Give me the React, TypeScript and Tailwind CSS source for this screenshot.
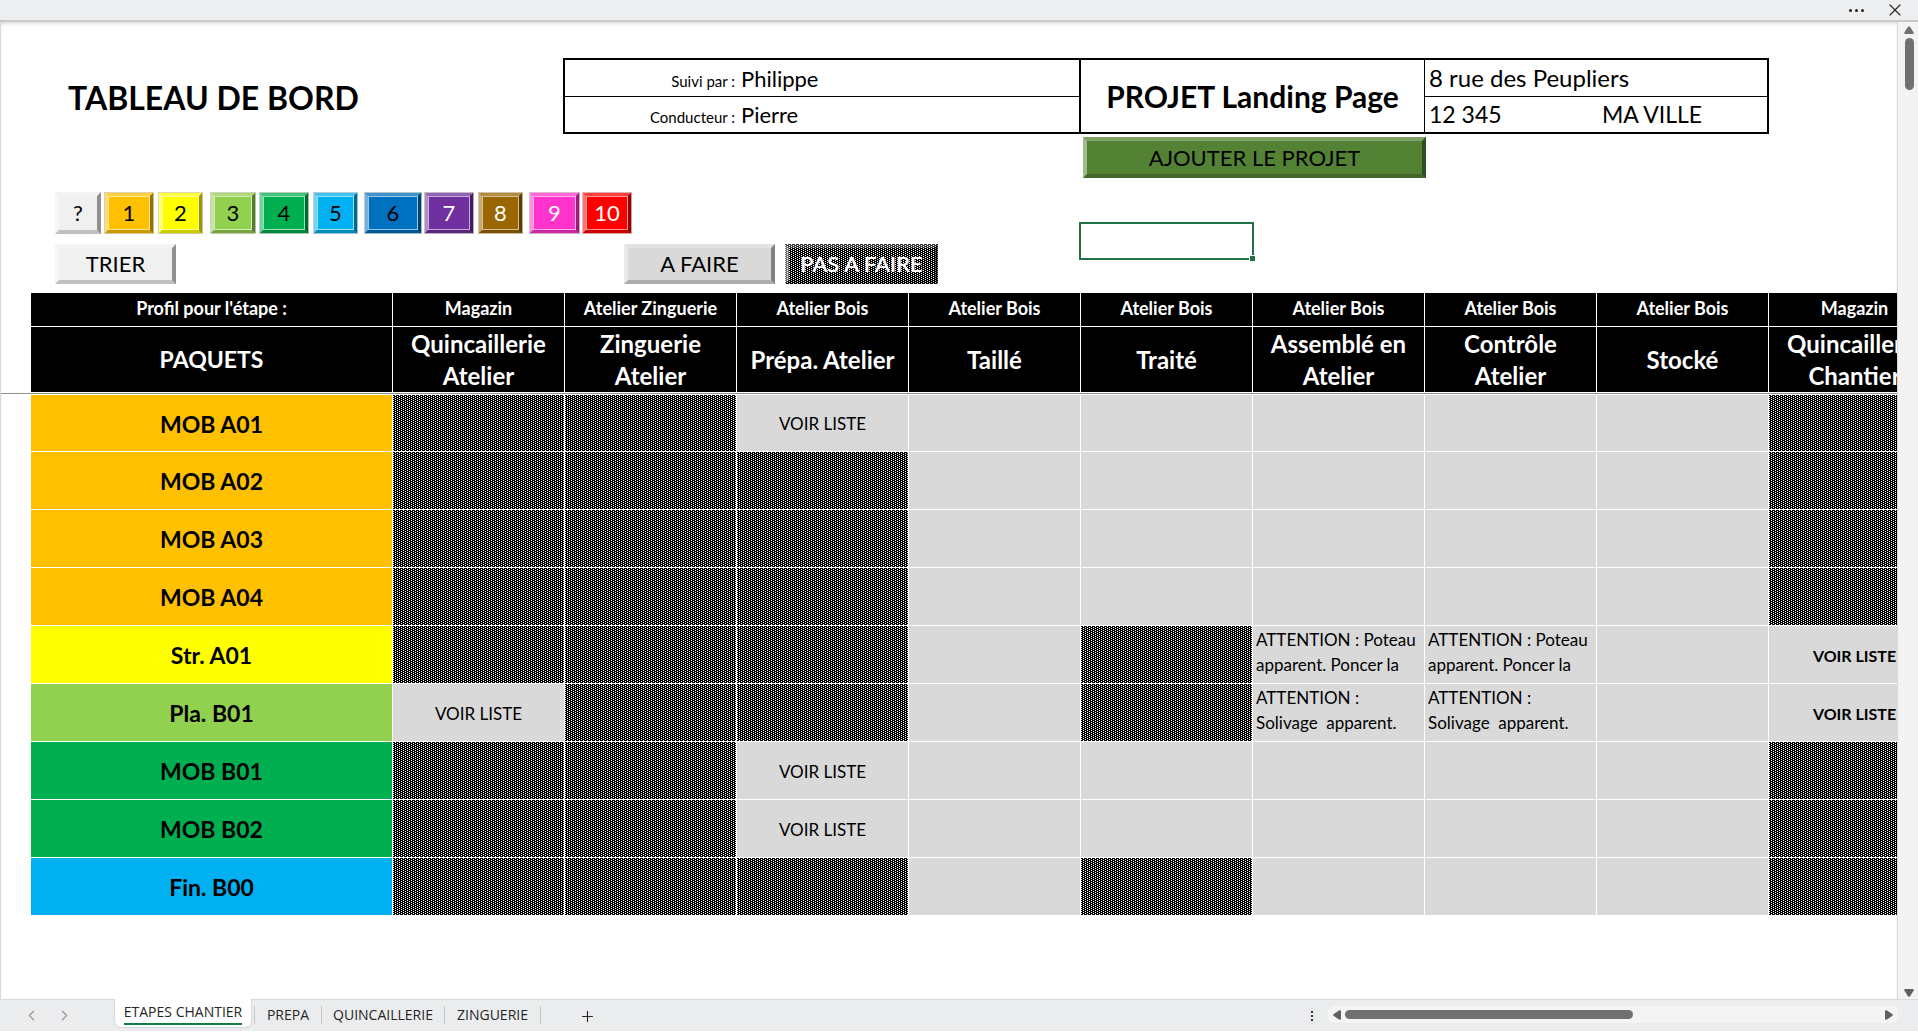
import { Plus, X, ChevronLeft, ChevronRight } from "lucide-react";

const HATCH =
  "bg-black bg-[conic-gradient(at_1px_1px,transparent_75%,white_0),conic-gradient(at_1px_1px,transparent_75%,white_0)] bg-[length:4px_2px] bg-[position:0_1px,2px_0]";

const BEVEL =
  "flex shrink-0 items-center justify-center border-4 border-t-white/25 border-l-white/45 border-r-black/40 border-b-black/20 text-[22px] leading-none";

const INNER = "shadow-[inset_0_0_0_1px_rgba(255,255,255,0.6)] outline outline-1 -outline-offset-1 outline-[#d4d0c8]/80";

const filters = [
  { label: "1", look: "ml-[3px] w-[50px] bg-[#ffc000] text-black" },
  { label: "2", look: "ml-1 w-[45px] bg-[#ffff00] text-black" },
  { label: "3", look: "ml-[7px] w-[46px] bg-[#92d050] text-black" },
  { label: "4", look: "ml-[3px] w-[50px] bg-[#00b050] text-black" },
  { label: "5", look: "ml-1 w-[45px] bg-[#00b0f0] text-black" },
  { label: "6", look: "ml-[6px] w-[58px] bg-[#0070c0] text-black" },
  { label: "7", look: "ml-[2px] w-[50px] bg-[#7030a0] text-white" },
  { label: "8", look: "ml-1 w-[45px] bg-[#996600] text-white" },
  { label: "9", look: "ml-[6px] w-[51px] bg-[#ff33cc] text-white" },
  { label: "10", look: "ml-[2px] w-[50px] bg-[#ff0000] text-white" },
];

const columns = [
  { profile: "Magazin", step: ["Quincaillerie", "Atelier"] },
  { profile: "Atelier Zinguerie", step: ["Zinguerie", "Atelier"] },
  { profile: "Atelier Bois", step: ["Prépa. Atelier"] },
  { profile: "Atelier Bois", step: ["Taillé"] },
  { profile: "Atelier Bois", step: ["Traité"] },
  { profile: "Atelier Bois", step: ["Assemblé en", "Atelier"] },
  { profile: "Atelier Bois", step: ["Contrôle", "Atelier"] },
  { profile: "Atelier Bois", step: ["Stocké"] },
  { profile: "Magazin", step: ["Quincaillerie", "Chantier"] },
];

const ORANGE = "bg-[#ffc000]";
const GREEN = "bg-[#00b050]";
const STR = ["ATTENTION : Poteau", "apparent. Poncer la"];
const PLA = ["ATTENTION :", "Solivage  apparent."];

/* "x" = pas à faire, "" = à faire, "v" = liste, "V" = liste en gras, array = note */
type Cell = "x" | "" | "v" | "V" | string[];
const rows: { name: string; color: string; cells: Cell[] }[] = [
  { name: "MOB A01", color: ORANGE, cells: ["x", "x", "v", "", "", "", "", "", "x"] },
  { name: "MOB A02", color: ORANGE, cells: ["x", "x", "x", "", "", "", "", "", "x"] },
  { name: "MOB A03", color: ORANGE, cells: ["x", "x", "x", "", "", "", "", "", "x"] },
  { name: "MOB A04", color: ORANGE, cells: ["x", "x", "x", "", "", "", "", "", "x"] },
  { name: "Str. A01", color: "bg-[#ffff00]", cells: ["x", "x", "x", "", "x", STR, STR, "", "V"] },
  { name: "Pla. B01", color: "bg-[#92d050]", cells: ["v", "x", "x", "", "x", PLA, PLA, "", "V"] },
  { name: "MOB B01", color: GREEN, cells: ["x", "x", "v", "", "", "", "", "", "x"] },
  { name: "MOB B02", color: GREEN, cells: ["x", "x", "v", "", "", "", "", "", "x"] },
  { name: "Fin. B00", color: "bg-[#00b0f0]", cells: ["x", "x", "x", "", "x", "", "", "", "x"] },
];

function StepCell({ cell }: { cell: Cell }) {
  const edge = "border-r border-b border-white p-0";
  if (cell === "x") return <td className={`${edge} ${HATCH} bg-clip-padding`} />;
  if (Array.isArray(cell))
    return (
      <td className={`${edge} bg-[#d9d9d9] pl-[3px] align-top`}>
        <div className="h-[56px] overflow-hidden pt-px text-[17px] leading-[25px] whitespace-pre">
          {cell.map((line) => (
            <div key={line}>{line}</div>
          ))}
        </div>
      </td>
    );
  return (
    <td className={`${edge} bg-[#d9d9d9] pt-0.5 text-center`}>
      {cell === "v" && <span className="text-[17px]">VOIR LISTE</span>}
      {cell === "V" && <span className="text-base font-bold">VOIR LISTE</span>}
    </td>
  );
}

function StepsTable() {
  return (
    <table className="mt-[9px] w-[1940px] table-fixed border-separate border-spacing-0">
      <colgroup>
        <col className="w-[30px]" />
        <col className="w-[362px]" />
        {columns.map((_, i) => (
          <col key={i} className="w-[172px]" />
        ))}
      </colgroup>
      <thead className="text-white">
        <tr className="h-[34px] text-[18px] leading-6">
          <td />
          <th className="border-r border-b border-white bg-black p-0 pb-1">Profil pour l'étape :</th>
          {columns.map((c, i) => (
            <th key={i} className="border-r border-b border-white bg-black p-0 pb-1">
              {c.profile}
            </th>
          ))}
        </tr>
        <tr className="h-[65px] text-2xl">
          <td />
          <th className="border-r border-white bg-black p-0 text-[23px]">PAQUETS</th>
          {columns.map((c, i) => (
            <th key={i} className="border-r border-white bg-black p-0 leading-8 whitespace-nowrap">
              {c.step.map((s) => (
                <div key={s}>{s}</div>
              ))}
            </th>
          ))}
        </tr>
      </thead>
      <tbody>
        <tr aria-hidden="true">
          <td colSpan={11} className="h-[3px] border-y border-white bg-[#8f938f] p-0" />
        </tr>
        {rows.map((r) => (
          <tr key={r.name} className="h-[58px] nth-2:h-[57px]">
            <td />
            <th className={`border-r border-b border-white p-0 pt-0.5 text-[23px] ${r.color}`}>{r.name}</th>
            {r.cells.map((c, i) => (
              <StepCell key={i} cell={c} />
            ))}
          </tr>
        ))}
      </tbody>
    </table>
  );
}

function ProjectCard() {
  return (
    <div className="grid h-[76px] w-[1206px] shrink-0 grid-cols-[516px_344px_1fr] border-2 border-black text-[22px]">
      <dl className="grid grid-rows-[37px_35px] border-r-2 border-black leading-9">
        <div className="flex items-baseline border-b border-black pt-px">
          <dt className="w-[170px] text-right text-[15px]">Suivi par :</dt>
          <dd className="pl-[6px]">Philippe</dd>
        </div>
        <div className="flex items-baseline leading-[35px]">
          <dt className="w-[170px] text-right text-[15px]">Conducteur :</dt>
          <dd className="pl-[6px]">Pierre</dd>
        </div>
      </dl>
      <div className="flex items-center justify-center border-r border-black text-[30px] font-bold whitespace-nowrap">
        PROJET Landing Page
      </div>
      <address className="grid grid-rows-[37px_35px] text-[23px] not-italic">
        <div className="border-b border-black pl-1 text-2xl leading-9">8 rue des Peupliers</div>
        <div className="flex pl-1 leading-[35px]">
          <span className="w-[173px]">12 345</span>
          <span>MA VILLE</span>
        </div>
      </address>
    </div>
  );
}

function Sheet() {
  return (
    <main className="relative min-w-0 flex-1 overflow-hidden border-x border-[#d8dada] bg-white pt-9 shadow-[inset_0_3px_4px_-2px_rgba(0,0,0,0.2)]">
      <div className="flex items-center">
        <h1 className="w-[562px] shrink-0 pt-[3px] pl-[67px] text-[32px] leading-10 font-bold">TABLEAU DE BORD</h1>
        <ProjectCard />
      </div>
      <button className={`${BEVEL} mt-[3px] ml-[1082px] h-[41px] w-[343px] bg-[#548235]`}>AJOUTER LE PROJET</button>
      <div className="mt-[14px] ml-[54px] flex h-[42px]">
        <button className={`${BEVEL} w-[46px] bg-[#f0f0f0]`}>?</button>
        {filters.map((f) => (
          <button key={f.label} className={`${BEVEL} ${INNER} ${f.look}`}>
            {f.label}
          </button>
        ))}
      </div>
      <div className="mt-[10px] ml-[54px] flex h-10">
        <button className={`${BEVEL} w-[121px] bg-[#f0f0f0]`}>TRIER</button>
        <button className={`${BEVEL} ml-[448px] w-[151px] bg-[#d9d9d9]`}>A FAIRE</button>
        <button
          className={`${BEVEL} ${HATCH} ml-[10px] w-[153px] whitespace-nowrap text-white [background-origin:border-box] [text-shadow:0_0_1px_white]`}
        >
          PAS A FAIRE
        </button>
      </div>
      <div className="absolute top-[200px] left-[1078px] h-[38px] w-[175px] border-2 border-[#217346]">
        <span className="absolute -right-[3px] -bottom-[3px] size-[6px] border-t border-l border-white bg-[#217346]" />
      </div>
      <StepsTable />
    </main>
  );
}

function VerticalScroll() {
  return (
    <div className="flex w-5 flex-col items-center bg-[#f3f3f3] pt-1 pl-0.5">
      <svg className="h-[8px] w-[10px] fill-[#707070]" viewBox="0 0 10 8">
        <path d="M4 .8Q5-.4 6 .8L9.7 6.4Q10 8 8.800 8H1.200Q0 8 .3 6.400Z" />
      </svg>
      <div className="mt-1 h-[52px] w-[9px] rounded-full bg-[#707070]" />
      <div className="flex-1" />
      <svg className="mb-[2px] h-[8px] w-[10px] fill-[#606060]" viewBox="0 0 10 8">
        <path d="M4 7.200Q5 8.400 6 7.200L9.700 1.600Q10 0 8.800 0H1.200Q0 0 .3 1.600Z" />
      </svg>
    </div>
  );
}

function BottomBar() {
  return (
    <footer className="mb-px flex h-8 shrink-0 items-start border-t border-[#d8dada] bg-[#ebecee] font-['Open_Sans',sans-serif] text-sm text-[#262626]">
      <div className="flex h-[30px] w-[115px] items-center gap-4 pl-[23px] text-[#9a9a9a]">
        <button aria-label="Feuille précédente">
          <ChevronLeft size={17} strokeWidth={1.8} />
        </button>
        <button aria-label="Feuille suivante">
          <ChevronRight size={17} strokeWidth={1.8} />
        </button>
      </div>
      <nav className="flex">
        <button className="-mt-px flex h-7 w-[136px] items-start justify-center rounded-b-md bg-white shadow-[0_0_2px_rgba(0,0,0,0.25)] [clip-path:inset(0_-3px_-3px_-3px)]">
          <span className="mt-px h-[25px] border-b-2 border-[#107c41] leading-6 whitespace-nowrap">ETAPES CHANTIER</span>
        </button>
        <div className="mt-[6px] ml-[3px] flex h-[18px] items-center border-l border-[#c6c6c6]">
          <button className="h-[18px] w-[67px] border-r border-[#c6c6c6] leading-[18px]">PREPA</button>
          <button className="h-[18px] w-[123px] border-r border-[#c6c6c6] leading-[18px]">QUINCAILLERIE</button>
          <button className="h-[18px] w-[96px] border-r border-[#c6c6c6] leading-[18px]">ZINGUERIE</button>
        </div>
        <button aria-label="Nouvelle feuille" className="mt-[5px] ml-[38px]">
          <Plus size={17} strokeWidth={1.6} />
        </button>
      </nav>
      <div className="flex-1" />
      <div className="mt-[11px] mr-[15px] flex flex-col gap-[2px]">
        <i className="size-[2px] bg-[#333]" />
        <i className="size-[2px] bg-[#333]" />
        <i className="size-[2px] bg-[#333]" />
      </div>
      <div className="mt-[6px] mr-5 flex h-[17px] w-[570px] items-center rounded-md bg-[#f4f4f4] px-[5px]">
        <svg className="h-[10px] w-[8px] fill-[#606060]" viewBox="0 0 8 10">
          <path d="M.8 4Q-.4 5 .8 6L6.400 9.700Q8 10 8 8.800V1.200Q8 0 6.400 .3Z" />
        </svg>
        <div className="ml-1 h-[9px] w-[288px] rounded-full bg-[#707070]" />
        <div className="flex-1" />
        <svg className="h-[10px] w-[8px] fill-[#606060]" viewBox="0 0 8 10">
          <path d="M7.200 4Q8.400 5 7.200 6L1.600 9.700Q0 10 0 8.800V1.200Q0 0 1.600 .3Z" />
        </svg>
      </div>
    </footer>
  );
}

export default function App() {
  return (
    <div className="flex h-screen flex-col overflow-hidden bg-white font-['Lato',sans-serif] text-black">
      <header className="flex h-[22px] shrink-0 items-center justify-end border-b-2 border-[#c8caca] bg-[#eceeef] pr-[13px] text-[#222]">
        <button aria-label="Plus d'options" className="mr-[21px] flex gap-[3px]">
          <i className="size-[3px] rounded-full bg-[#222]" />
          <i className="size-[3px] rounded-full bg-[#222]" />
          <i className="size-[3px] rounded-full bg-[#222]" />
        </button>
        <button aria-label="Fermer">
          <X size={20} strokeWidth={1.3} />
        </button>
      </header>
      <div className="flex min-h-0 flex-1">
        <Sheet />
        <VerticalScroll />
      </div>
      <BottomBar />
    </div>
  );
}
